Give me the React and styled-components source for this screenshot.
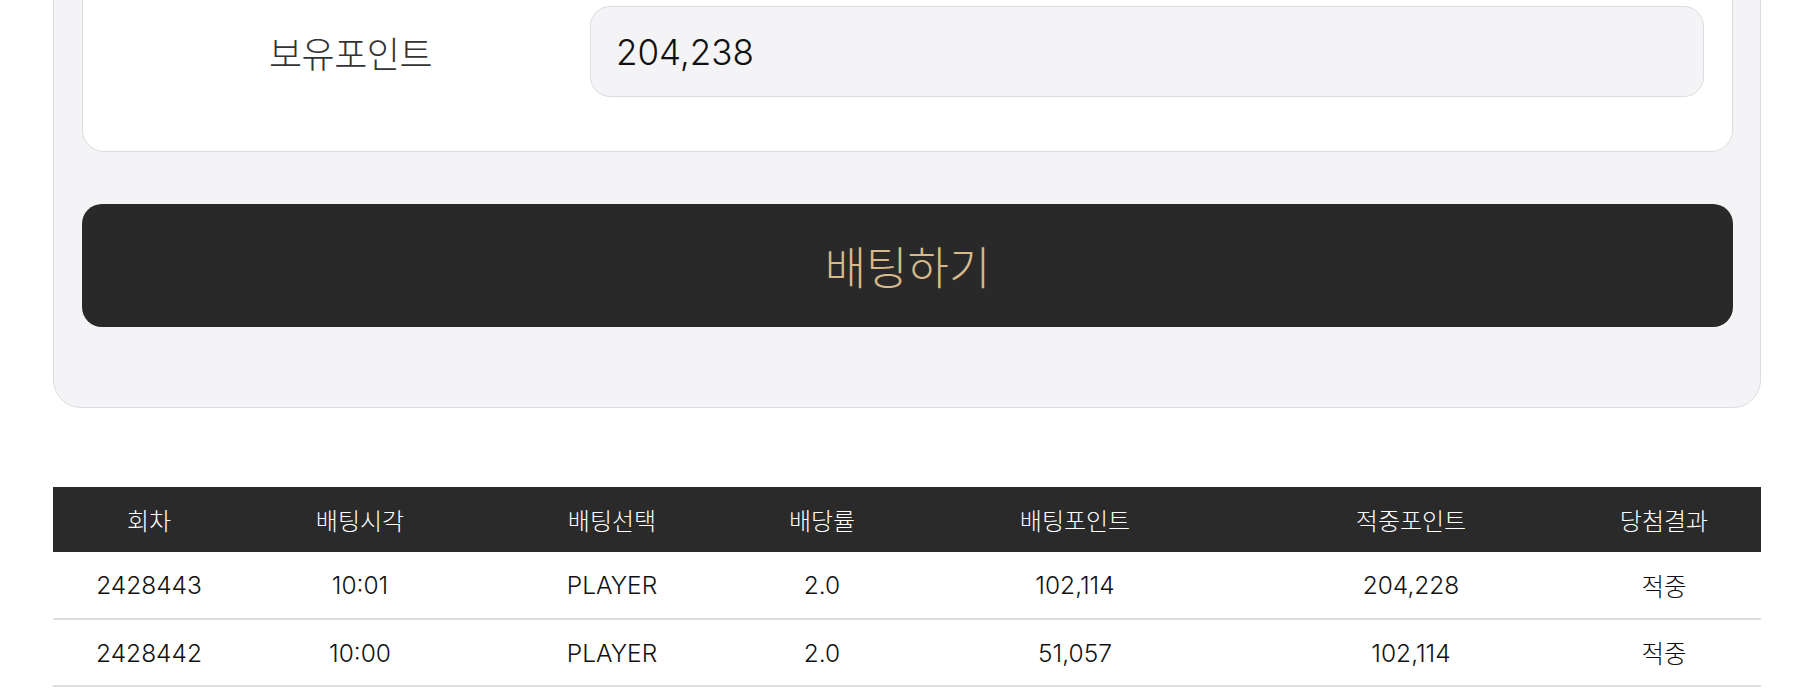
import React from "react";
import styled, { createGlobalStyle } from "styled-components";

const rows = [
  { round: "2428443", time: "10:01", pick: "PLAYER", odds: "2.0", bet: "102,114", win: "204,228", result: "적중" },
  { round: "2428442", time: "10:00", pick: "PLAYER", odds: "2.0", bet: "51,057", win: "102,114", result: "적중" },
];

const columns = [
  { title: "회차", key: "round", width: 192 },
  { title: "배팅시각", key: "time", width: 230 },
  { title: "배팅선택", key: "pick", width: 274 },
  { title: "배당률", key: "odds", width: 146 },
  { title: "배팅포인트", key: "bet", width: 360 },
  { title: "적중포인트", key: "win", width: 312 },
  { title: "당첨결과", key: "result", width: 194 },
];

const App = () => {
  return (
    <>
      <GlobalStyle />
      <Page>
        <BetPanel>
          <FormCard>
            <FieldLabel>보유포인트</FieldLabel>
            <PointInput readOnly value="204,238" />
          </FormCard>
          <BetButton type="button">배팅하기</BetButton>
        </BetPanel>

        <HistoryTable>
          <colgroup>
            {columns.map((col) => (
              <col key={col.key} style={{ width: col.width }} />
            ))}
          </colgroup>
          <thead>
            <tr>
              {columns.map((col) => (
                <HeadCell key={col.key}>{col.title}</HeadCell>
              ))}
            </tr>
          </thead>
          <tbody>
            {rows.map((row) => (
              <BodyRow key={row.round}>
                {columns.map((col) => (
                  <BodyCell key={col.key}>{row[col.key]}</BodyCell>
                ))}
              </BodyRow>
            ))}
          </tbody>
        </HistoryTable>
      </Page>
    </>
  );
};

const GlobalStyle = createGlobalStyle`
  html, body {
    margin: 0;
    padding: 0;
    background: #ffffff;
    overflow: hidden;
  }
  body {
    font-family: Inter, "Noto Sans CJK KR", sans-serif;
    color: #222;
  }
  * {
    box-sizing: border-box;
  }
`;

const Page = styled.div`
  width: 1708px;
  margin-left: 53px;
  margin-top: -104px;
`;

const BetPanel = styled.section`
  background: #f4f4f6;
  border: 1px solid #dcdcdf;
  border-radius: 28px;
  padding: 28px 27px 80px 28px;
`;

const FormCard = styled.div`
  display: grid;
  grid-template-columns: 479px 1fr;
  align-items: center;
  background: #ffffff;
  border: 1px solid #dcdcdf;
  border-radius: 22px;
  padding: 80px 28px 54px 28px;
`;

const FieldLabel = styled.label`
  text-align: center;
  font-size: 36px;
  font-weight: 300;
  color: #333;
  letter-spacing: -0.5px;
`;

const PointInput = styled.input`
  height: 91px;
  width: 100%;
  border: 1px solid #dcdcdf;
  border-radius: 20px;
  background: #f4f4f6;
  padding: 0 25px;
  font-family: inherit;
  font-size: 35px;
  font-weight: 300;
  color: #111;
  outline: none;
`;

const BetButton = styled.button`
  display: block;
  width: 100%;
  height: 123px;
  margin-top: 52px;
  border: none;
  border-radius: 20px;
  background: #292929;
  color: #d6b98b;
  font-family: inherit;
  font-size: 45px;
  font-weight: 300;
  cursor: pointer;
`;

const HistoryTable = styled.table`
  width: 1708px;
  margin-top: 79px;
  border-collapse: collapse;
  table-layout: fixed;
`;

const HeadCell = styled.th`
  height: 65px;
  background: #2a2a2a;
  color: #ffffff;
  font-size: 24px;
  font-weight: 300;
  text-align: center;
  padding: 0;
`;

const BodyRow = styled.tr`
  border-bottom: 2px solid #dedede;
`;

const BodyCell = styled.td`
  height: 67px;
  text-align: center;
  font-size: 24.5px;
  font-weight: 300;
  color: #111;
  padding: 0;
`;

export default App;
